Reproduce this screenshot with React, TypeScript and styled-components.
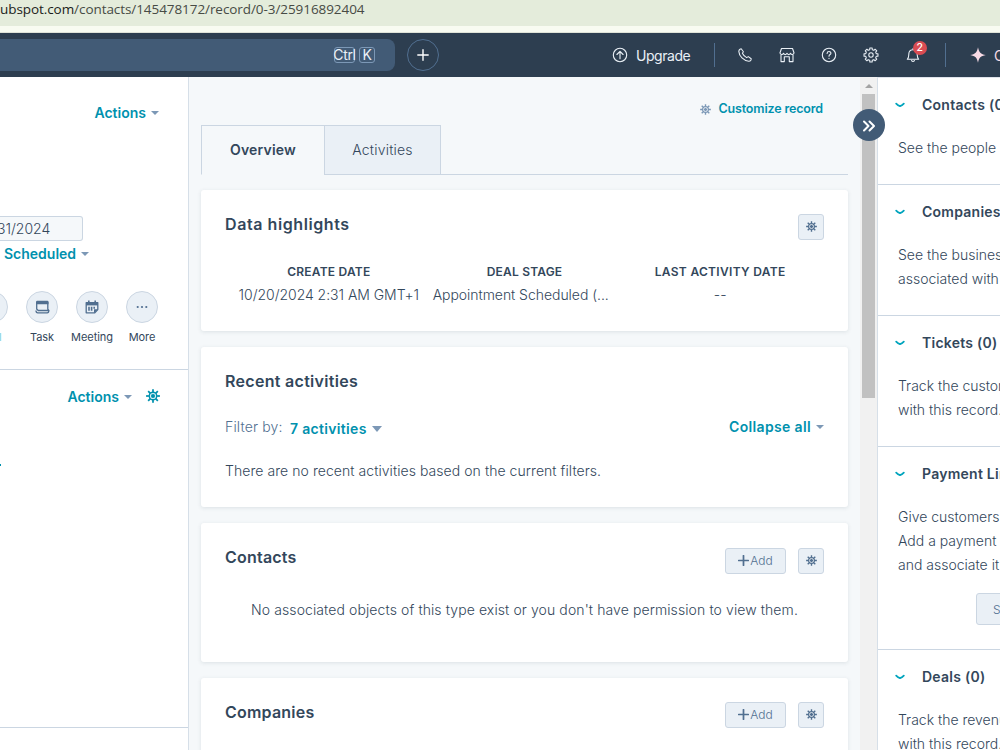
import React from 'react';
import styled, { createGlobalStyle } from 'styled-components';

const teal = '#0091ae';
const ink = '#33475b';
const slate = '#516f90';
const line = '#cbd6e2';
const mist = '#f5f8fa';

const Global = createGlobalStyle`
  * { box-sizing: border-box; }
  body { margin: 0; font-family: Inter, "Liberation Sans", sans-serif; font-size: 14px; font-weight: 300; color: ${ink}; }
  svg { display: block; flex: none; }
  button { font-family: inherit; padding: 0; margin: 0; }
`;

const Page = styled.div`
  width: 1000px;
  height: 750px;
  overflow: hidden;
  display: flex;
  flex-direction: column;
  background: #fff;
`;

/* ---------- browser strip ---------- */
const AddressBar = styled.div`
  height: 26px;
  flex: none;
  background: #e4ecdb;
  font: 400 13.5px/18px "Open Sans", sans-serif;
  letter-spacing: -0.07px;
  color: #474b45;
  white-space: nowrap;
  b { font-weight: 400; color: #1b1d1a; }
`;
const BrowserEdge = styled.div`
  height: 7px;
  flex: none;
  background: #f8fbf1;
  border-bottom: 1px solid #dfe3d8;
`;

/* ---------- navigation ---------- */
const Nav = styled.header`
  height: 44px;
  flex: none;
  display: flex;
  align-items: center;
  background: #2d3e50;
  color: #eaf0f6;
  > * { flex: none; }
`;
const Search = styled.div`
  width: 395px;
  height: 32px;
  border-radius: 0 8px 8px 0;
  background: #425b76;
  display: flex;
  align-items: center;
  justify-content: flex-end;
  gap: 4px;
  padding-right: 20px;
`;
const Key = styled.kbd<{ $w: number }>`
  width: ${p => p.$w}px;
  height: 16px;
  border: 1px solid #7c98b6;
  border-radius: 3px;
  font: 400 14px/14px Inter, sans-serif;
  letter-spacing: -0.35px;
  display: flex;
  justify-content: center;
`;
const CreateButton = styled.button`
  width: 32px;
  height: 32px;
  margin-left: 12px;
  border: 1px solid #516f90;
  border-radius: 50%;
  background: transparent;
  color: #fff;
  display: grid;
  place-items: center;
`;
const Upgrade = styled.div`
  margin-left: 173px;
  width: 103px;
  height: 24px;
  display: flex;
  align-items: center;
  gap: 8px;
  border-right: 1px solid #516f90;
  font-weight: 400;
  letter-spacing: -0.45px;
`;
const Tools = styled.div`
  width: 231px;
  height: 24px;
  padding-left: 9.5px;
  display: flex;
  align-items: center;
  border-right: 1px solid #516f90;
`;
const Tool = styled.span`
  width: 41.8px;
  flex: none;
  position: relative;
  display: flex;
  justify-content: center;
`;
const Badge = styled.span`
  position: absolute;
  left: 21px;
  top: -6px;
  width: 14px;
  height: 14px;
  border-radius: 50%;
  background: #d94c53;
  color: #fff;
  font: 500 10.5px/14px Inter, sans-serif;
  text-align: center;
`;
const Copilot = styled.div`
  display: flex;
  align-items: center;
  gap: 8px;
  margin-left: 24px;
  white-space: nowrap;
  font-weight: 400;
  color: #f8dbe6;
`;

/* ---------- shared ---------- */
const Body = styled.div`
  flex: 1;
  min-height: 0;
  display: flex;
  position: relative;
`;
const Link = styled.a<{ $ls?: number; $size?: number }>`
  display: inline-flex;
  align-items: center;
  color: ${teal};
  font-weight: 600;
  font-size: ${p => p.$size ?? 14}px;
  line-height: 20px;
  letter-spacing: ${p => p.$ls ?? 0}px;
  white-space: nowrap;
`;
const Caret = styled.i<{ $big?: boolean }>`
  border: solid transparent;
  border-width: ${p => (p.$big ? '6px 5px 0' : '4px 4px 0')};
  border-top-color: #7c98b6;
  margin-left: 5px;
`;

/* ---------- left panel ---------- */
const Left = styled.aside`
  width: 189px;
  flex: none;
  border-right: 1px solid #d6dfe8;
  overflow: hidden;
`;
const Summary = styled.section`
  height: 293px;
  border-bottom: 1px solid ${line};
  padding-top: 26px;
`;
const LeftActions = styled.div`
  display: flex;
  justify-content: flex-end;
  padding-right: 29px;
`;
const DateField = styled.div`
  margin-top: 93px;
  width: 83px;
  height: 25px;
  border: 1px solid ${line};
  border-left: 0;
  border-radius: 0 3px 3px 0;
  background: ${mist};
  line-height: 23px;
  text-indent: -3px;
`;
const Stage = styled.div`
  display: flex;
  padding: 3px 0 0 4px;
`;
const QuickActions = styled.div`
  display: flex;
  margin: 27px 0 0 -33px;
`;
const Quick = styled.div<{ $active?: boolean }>`
  width: 50px;
  flex: none;
  display: flex;
  flex-direction: column;
  align-items: center;
  gap: 6px;
  font-size: 11px;
  line-height: 16px;
  letter-spacing: -0.05px;
  font-weight: 400;
  ${p => p.$active && 'color: #7fd1de;'}
`;
const Round = styled.span`
  width: 32px;
  height: 32px;
  border: 1px solid ${line};
  border-radius: 50%;
  background: #eaf0f6;
  color: ${slate};
  display: grid;
  place-items: center;
`;
const About = styled.section`
  height: 358px;
  border-bottom: 1px solid ${line};
  padding-top: 17px;
`;
const AboutHead = styled.div`
  display: flex;
  align-items: center;
  justify-content: flex-end;
  gap: 14px;
  padding-right: 28px;
  color: ${teal};
  svg { margin-top: -2px; }
`;
const AboutLink = styled.div`
  margin-top: 57px;
  width: 1px;
  height: 2px;
  background: ${teal};
`;

/* ---------- middle ---------- */
const Middle = styled.main`
  width: 671px;
  flex: none;
  background: ${mist};
  padding: 22px 12px 0;
`;
const Customize = styled.div`
  display: flex;
  justify-content: flex-end;
  align-items: center;
  gap: 7px;
  padding-right: 25px;
  color: #7c98b6;
`;
const Tabs = styled.div`
  display: flex;
  height: 50px;
  margin: 6px 0 15px;
`;
const Tab = styled.div<{ $on?: boolean }>`
  width: ${p => (p.$on ? 123 : 117)}px;
  border: 1px solid ${line};
  ${p => p.$on && 'border-bottom-color: transparent; border-right: 0;'}
  background: ${p => (p.$on ? 'transparent' : '#eaf0f6')};
  font-weight: ${p => (p.$on ? 600 : 300)};
  letter-spacing: 0.2px;
  padding-bottom: 1px;
  display: grid;
  place-items: center;
`;
const TabFill = styled.div`
  flex: 1;
  border-bottom: 1px solid ${line};
`;
const Card = styled.section<{ $h: number; $top?: number }>`
  height: ${p => p.$h}px;
  margin-bottom: 16px;
  padding: ${p => p.$top ?? 24}px 24px 0;
  border-radius: 3px;
  background: #fff;
  box-shadow: 0 1px 4px rgba(45, 62, 80, 0.12);
`;
const CardHead = styled.header`
  display: flex;
  align-items: flex-start;
  height: 26px;
  gap: 12px;
`;
const CardTitle = styled.h2<{ $ls?: number; $lh?: number }>`
  flex: 1;
  margin: 0;
  font-size: 16px;
  line-height: ${p => p.$lh ?? 20}px;
  font-weight: 600;
  letter-spacing: ${p => p.$ls ?? 0.22}px;
`;
const SmallButton = styled.button<{ $w: number }>`
  width: ${p => p.$w}px;
  height: 26px;
  padding-bottom: 1px;
  border: 1px solid ${line};
  border-radius: 3px;
  background: #eaf0f6;
  color: ${slate};
  font-size: 12px;
  font-weight: 300;
  display: flex;
  align-items: center;
  justify-content: center;
  gap: 1px;
`;
const Highlights = styled.div`
  display: grid;
  grid-template-columns: repeat(3, 1fr);
  padding: 22px 6px 0;
  text-align: center;
  white-space: nowrap;
`;
const Label = styled.div<{ $ls: number }>`
  font-size: 12px;
  font-weight: 600;
  line-height: 20px;
  letter-spacing: ${p => p.$ls}px;
`;
const Value = styled.div<{ $left?: boolean }>`
  line-height: 20px;
  margin-top: 3px;
  letter-spacing: -0.04px;
  ${p => p.$left && 'text-align: left; padding-left: 6px;'}
`;
const Filters = styled.div`
  display: flex;
  align-items: flex-start;
  margin-top: 20px;
  line-height: 20px;
`;
const FilterLabel = styled.span`
  color: ${slate};
  width: 65px;
  letter-spacing: 0.15px;
`;
const FilterValue = styled.span`
  flex: 1;
  padding-top: 2px;
  display: flex;
`;
const Note = styled.p<{ $top: number; $center?: boolean }>`
  margin: ${p => p.$top}px 0 0;
  line-height: 20px;
  white-space: nowrap;
  text-align: ${p => (p.$center ? 'center' : 'left')};
  letter-spacing: ${p => (p.$center ? 0.1 : 0.06)}px;
`;
const Scrollbar = styled.div`
  width: 17px;
  flex: none;
  background: #f1f1f1;
  display: flex;
  flex-direction: column;
  align-items: center;
  padding-top: 7px;
  i { border: solid transparent; border-width: 0 4px 4px; border-bottom-color: #a3a3a3; }
`;
const Thumb = styled.div`
  width: 13px;
  height: 304px;
  margin-top: 6px;
  background: #c1c1c1;
`;
const Collapse = styled.button`
  position: absolute;
  left: 853px;
  top: 32px;
  width: 32px;
  height: 32px;
  padding-top: 2px;
  border: 0;
  border-radius: 50%;
  background: #425b76;
  color: #fff;
  display: grid;
  place-items: center;
`;

/* ---------- right panel ---------- */
const Right = styled.aside`
  flex: 1;
  min-width: 0;
  overflow: hidden;
  border-left: 1px solid #d6dfe8;
  border-top: 1px solid #dfe3eb;
`;
const Section = styled.section`
  padding: 15px 0 24px 20px;
  border-bottom: 1px solid ${line};
  line-height: 24px;
  white-space: nowrap;
`;
const SectionHead = styled.h3`
  margin: 0 0 19px -3px;
  display: flex;
  align-items: center;
  gap: 17px;
  font-size: 14px;
  font-weight: 600;
  letter-spacing: 0.25px;
  svg { color: #00a4bd; }
`;
const SetUp = styled.button`
  display: block;
  width: 120px;
  height: 32px;
  margin: 16px 0 0 78px;
  padding-left: 16px;
  border: 1px solid ${line};
  border-radius: 3px;
  background: #eaf0f6;
  color: ${slate};
  font-size: 12px;
  font-weight: 300;
  text-align: left;
`;

/* Closed outline of an eight-toothed gear centred on (12,12). */
const gearPath = (outer: number, inner: number, half = 0.17) => {
  const pts: string[] = [];
  for (let i = 0; i < 8; i++) {
    const a = (i * Math.PI) / 4;
    [[-half - 0.06, inner], [-half, outer], [half, outer], [half + 0.06, inner]].forEach(([d, r]) =>
      pts.push(`${(12 + r * Math.sin(a + d)).toFixed(2)} ${(12 - r * Math.cos(a + d)).toFixed(2)}`),
    );
  }
  return `M${pts.join('L')}Z`;
};

const Gear = ({ size = 11 }: { size?: number }) => (
  <svg width={size} height={size} viewBox="0 0 24 24" fill="none" stroke="currentColor">
    <path d={gearPath(11.8, 7.8, 0.13)} fill="currentColor" stroke="none" />
    <circle cx="12" cy="12" r="4.4" stroke="#fff" strokeOpacity=".85" strokeWidth="1.9" />
  </svg>
);
const GearLine = () => (
  <svg width="16" height="16" viewBox="0 0 24 24" fill="none" stroke="currentColor" strokeWidth="1.6" strokeLinejoin="round">
    <path d={gearPath(10.6, 8.2)} />
    <circle cx="12" cy="12" r="3.3" />
  </svg>
);
const Plus = ({ size, w = 1.6 }: { size: number; w?: number }) => (
  <svg width={size} height={size} viewBox="0 0 12 12" stroke="currentColor" strokeWidth={w} strokeLinecap="round">
    <path d="M6 .8v10.4M.8 6h10.4" />
  </svg>
);
const Chevron = () => (
  <svg width="10" height="6" viewBox="0 0 10 6" fill="none" stroke="currentColor" strokeWidth="1.8" strokeLinecap="round" strokeLinejoin="round">
    <path d="M1.2 1.6Q3 3.400 5 4.200Q7 3.400 8.800 1.600" />
  </svg>
);

const AddTools = () => (
  <>
    <SmallButton $w={61}><Plus size={11} w={1.9} />Add</SmallButton>
    <SmallButton $w={26}><Gear /></SmallButton>
  </>
);

const sections = [
  { title: 'Contacts (0)', lines: ['See the people associated'] },
  { title: 'Companies (0)', lines: ['See the businesses', 'associated with this'] },
  { title: 'Tickets (0)', lines: ['Track the customer requests', 'with this record.'] },
  { title: 'Payment Links (0)', lines: ['Give customers a fast', 'Add a payment link', 'and associate it with'], action: 'Set up payments' },
  { title: 'Deals (0)', lines: ['Track the revenue', 'with this record.'] },
];

export default function App() {
  return (
    <Page>
      <Global />
      <AddressBar><b>ubspot.com</b>/contacts/145478172/record/0-3/25916892404</AddressBar>
      <BrowserEdge />
      <Nav>
        <Search><Key $w={21}>Ctrl</Key><Key $w={16}>K</Key></Search>
        <CreateButton><Plus size={12} w={1.4} /></CreateButton>
        <Upgrade>
          <svg width="16" height="16" viewBox="0 0 16 16" fill="none" stroke="currentColor" strokeWidth="1.1" strokeLinecap="round" strokeLinejoin="round">
            <circle cx="8" cy="8" r="6.7" /><path d="M8 11.8V4.6M4.9 7.5 8 4.4l3.1 3.1" />
          </svg>
          Upgrade
        </Upgrade>
        <Tools>
          <Tool>
            <svg width="14" height="14" viewBox="0 0 14 14" fill="none" stroke="currentColor" strokeWidth="1.05" strokeLinejoin="round">
              <path d="M2 1.2 3.2.8 5.4 3.7 4.4 5.3Q5.6 8 8.7 9.6L10.3 8.6 13.2 10.7Q13.2 13.3 10.8 13.2C5.6 12.8 1.1 8.2.8 3.4Q.9 1.9 2 1.2Z" />
            </svg>
          </Tool>
          <Tool>
            <svg width="16" height="16" viewBox="0 0 16 16" fill="none" stroke="currentColor" strokeWidth="1.1" strokeLinejoin="round">
              <path d="M2.5 1.5h11l1.5 4.3c0 2-2.8 2.3-3.5.4-.6 1.9-2.9 1.9-3.5 0-.6 1.9-2.9 1.9-3.5 0C3.8 8.1 1 7.8 1 5.8ZM2 8v6.6h3.3V9.8h5v4.8H14V8" />
            </svg>
          </Tool>
          <Tool>
            <svg width="16" height="16" viewBox="0 0 16 16" fill="none" stroke="currentColor" strokeWidth="1.1" strokeLinecap="round">
              <circle cx="8" cy="8" r="6.7" /><path d="M6.1 6.4c.1-2.5 3.800-2.400 3.800-.2C9.900 7.600 8 7.500 8 9.200M8 11.300v.1" />
            </svg>
          </Tool>
          <Tool><GearLine /></Tool>
          <Tool>
            <svg width="16" height="16" viewBox="0 0 16 16" fill="none" stroke="currentColor" strokeWidth="1.1" strokeLinecap="round" strokeLinejoin="round">
              <path d="M2.3 12.3h11.4C12.2 11 12.3 9.7 12.2 7c-.1-2.6-1.8-4.3-4.2-4.3S3.9 4.4 3.8 7c-.1 2.7 0 4-1.5 5.3ZM8 2.7V1.5M6.5 13.6q1.5 1.5 3 0" />
            </svg>
            <Badge>2</Badge>
          </Tool>
        </Tools>
        <Copilot>
          <svg width="16" height="16" viewBox="0 0 16 16" fill="currentColor">
            <path d="M8 .2C9 5.300 10.700 7 15.800 8 10.700 9 9 10.700 8 15.800 7 10.700 5.300 9 .2 8 5.300 7 7 5.300 8 .2Z" />
          </svg>
          Copilot
        </Copilot>
      </Nav>
      <Body>
        <Left>
          <Summary>
            <LeftActions><Link>Actions<Caret /></Link></LeftActions>
            <DateField>31/2024</DateField>
            <Stage><Link>Scheduled<Caret /></Link></Stage>
            <QuickActions>
              <Quick $active><Round />Call</Quick>
              <Quick>
                <Round>
                  <svg width="15" height="14" viewBox="0 0 15 14" fill="none" stroke="currentColor" strokeWidth="1.3" strokeLinejoin="round">
                    <path d="M1.7 2V9.600M12.800 2v7.200l1 1.300H3.200L1.700 9" /><path d="M1.100 1.800q0-1 1-1h10.400q1 0 1 1v2.500H1.100Z" fill="currentColor" stroke="none" /><path d="M1 10.500q0 2.300 1.800 2.300h9.400q1.600 0 1.600-2.300" />
                  </svg>
                </Round>
                Task
              </Quick>
              <Quick>
                <Round>
                  <svg width="14" height="14" viewBox="0 0 14 14" fill="none" stroke="currentColor" strokeWidth="1.3" strokeLinejoin="round">
                    <path d="M1.2 2.6h11.6v7l-3 3.2H1.2Z" /><path d="M1 2.2h12v3.200H1Z" fill="currentColor" stroke="none" /><path d="M3.8.5v2.300M10.200.5v2.300M4 6.800v4M6.600 6.800v4M9.200 6.800v2" strokeWidth="1.600" /><path d="M9 13V9.300h4Z" fill="currentColor" stroke="none" />
                  </svg>
                </Round>
                Meeting
              </Quick>
              <Quick>
                <Round>
                  <svg width="12" height="4" viewBox="0 0 12 4" fill="currentColor"><circle cx="1.7" cy="2" r="1.1" /><circle cx="6" cy="2" r="1.1" /><circle cx="10.3" cy="2" r="1.1" /></svg>
                </Round>
                More
              </Quick>
            </QuickActions>
          </Summary>
          <About>
            <AboutHead><Link>Actions<Caret /></Link><Gear size={14} /></AboutHead>
            <AboutLink />
          </About>
        </Left>
        <Middle>
          <Customize><Gear /><Link $size={12.5} $ls={-0.15}>Customize record</Link></Customize>
          <Tabs><Tab $on>Overview</Tab><Tab>Activities</Tab><TabFill /></Tabs>
          <Card $h={141}>
            <CardHead><CardTitle $ls={0.58}>Data highlights</CardTitle><SmallButton $w={26}><Gear /></SmallButton></CardHead>
            <Highlights>
              <div><Label $ls={0.2}>CREATE DATE</Label><Value>10/20/2024 2:31 AM GMT+1</Value></div>
              <div><Label $ls={0.2}>DEAL STAGE</Label><Value $left>Appointment Scheduled (...</Value></div>
              <div><Label $ls={0.32}>LAST ACTIVITY DATE</Label><Value>--</Value></div>
            </Highlights>
          </Card>
          <Card $h={160}>
            <CardHead><CardTitle $ls={0.3}>Recent activities</CardTitle></CardHead>
            <Filters>
              <FilterLabel>Filter by:</FilterLabel>
              <FilterValue><Link $ls={0.32}>7 activities<Caret $big /></Link></FilterValue>
              <Link $ls={0.35}>Collapse all<Caret /></Link>
            </Filters>
            <Note $top={22}>There are no recent activities based on the current filters.</Note>
          </Card>
          <Card $h={139} $top={25}>
            <CardHead><CardTitle $lh={18}>Contacts</CardTitle><AddTools /></CardHead>
            <Note $top={26} $center>No associated objects of this type exist or you don't have permission to view them.</Note>
          </Card>
          <Card $h={139}>
            <CardHead><CardTitle>Companies</CardTitle><AddTools /></CardHead>
          </Card>
        </Middle>
        <Scrollbar><i /><Thumb /></Scrollbar>
        <Right>
          {sections.map(s => (
            <Section key={s.title}>
              <SectionHead><Chevron />{s.title}</SectionHead>
              {s.lines.map(l => <div key={l}>{l}</div>)}
              {s.action && <SetUp>{s.action}</SetUp>}
            </Section>
          ))}
        </Right>
        <Collapse>
          <svg width="14" height="12" viewBox="0 0 14 12" fill="none" stroke="currentColor" strokeWidth="2" strokeLinecap="round" strokeLinejoin="round">
            <path d="M2 1.5 6.5 6 2 10.5M7.5 1.5 12 6 7.5 10.5" />
          </svg>
        </Collapse>
      </Body>
    </Page>
  );
}
